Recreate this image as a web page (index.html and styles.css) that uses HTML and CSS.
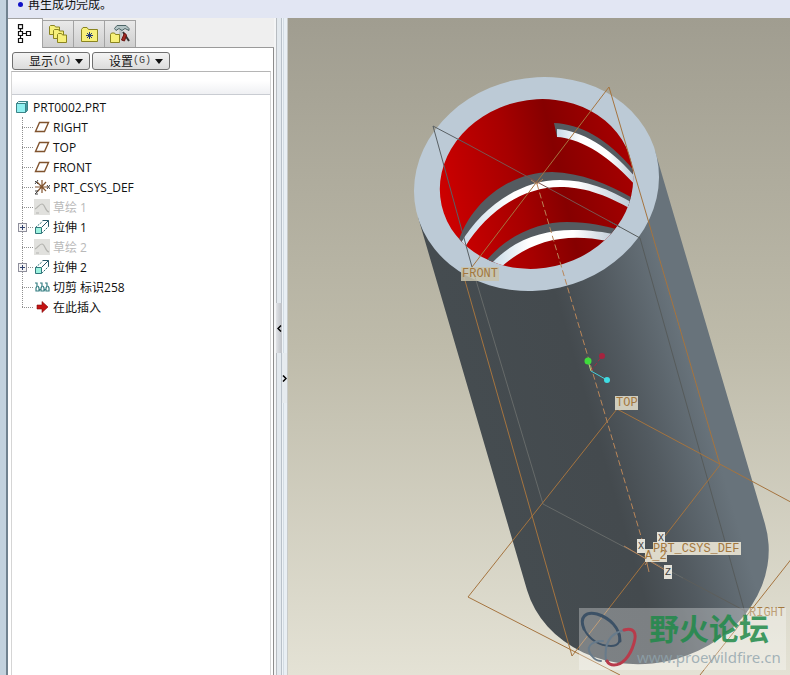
FILE: index.html
```html
<!DOCTYPE html>
<html lang="zh-CN">
<head>
  <meta charset="UTF-8" />
  <meta name="viewport" content="width=device-width, initial-scale=1.0" />
  <title>PRT0002</title>
  <link rel="stylesheet" href="styles.css">
</head>
<body>
  <div class="window">
    <p class="message"><span class="bullet"></span>再生成功完成。</p>

    <div class="workspace">
      <aside class="navigator">
        <nav class="tabs">
          <button class="tab active" type="button" aria-label="模型树">
            <svg width="16" height="20" viewBox="0 0 16 20" fill="none" stroke="#111" stroke-width="1.2">
              <path d="M3.5 4.5v11M5.500 9.500h4" />
              <path fill="#fff" d="M1.500 .7h4v4h-4zM1.500 7.500h4v4h-4zM9.500 7.500h4v4h-4zM1.500 14.500h4v4h-4z" />
            </svg>
          </button>
          <button class="tab" type="button" aria-label="文件夹浏览器">
            <svg width="20" height="20" viewBox="0 0 20 20" fill="#f7f07a" stroke="#8a8420">
              <path d="M1.500 10.500v-8l1-1h4l1 1.500h4v7.500z" />
              <path d="M5.500 14.500v-8l1-1h4l1 1.500h4v7.500z" />
              <path d="M9.500 18.500v-8l1-1h3l1 1.500h4v7.500z" />
            </svg>
          </button>
          <button class="tab" type="button" aria-label="收藏夹">
            <svg width="20" height="20" viewBox="0 0 20 20" fill="#f7f07a" stroke="#8a8420">
              <path d="M2.500 17.500v-12l1.500-2h4l1.500 2h9v12z" />
              <path stroke="#223a7a" d="M10.500 8v7M7 11.500h7M8 9l5 5M13 9l-5 5" />
            </svg>
          </button>
          <button class="tab" type="button" aria-label="连接">
            <svg width="22" height="20" viewBox="0 0 22 20">
              <path stroke="#b9c3c3" stroke-width="3" d="M12 5 11 15" />
              <path fill="#f7f07a" stroke="#8a8420" d="M1.500 18.500v-8l1-1.500h3l1 1.500h4v8z" />
              <path fill="#b4c4c5" stroke="#4d6567" d="M5.500 4.500 8 1.500h9l3 3v2l-4-2-3 2-3-2-3 2z" />
              <path stroke="#333" stroke-width="2" d="m14 8 6 9" />
              <path fill="#a32a22" stroke="#6b1511" d="m12.500 16 3-7 2 2-2 6z" />
            </svg>
          </button>
        </nav>

        <div class="panel">
          <div class="toolbar">
            <button class="drop" type="button">显示<span class="key">(O)</span><i class="arrow"></i></button>
            <button class="drop" type="button">设置<span class="key">(G)</span><i class="arrow"></i></button>
          </div>

          <div class="tree-box">
            <div class="tree-head"></div>
            <div class="root">
              <svg width="14" height="14" viewBox="0 0 14 14" stroke="#3b8488">
                <path fill="#dffcfc" d="m1.500 3.500 2-2h9l-2 2z" />
                <path fill="#459a9f" d="m10.500 3.500 2-2v9l-2 2z" />
                <path fill="#8ff0f0" d="M1.500 3.500h9v9h-9z" />
              </svg>
              PRT0002.PRT
            </div>
            <ul class="tree">
              <li><svg class="icon"><use href="#plane" /></svg>RIGHT</li>
              <li><svg class="icon"><use href="#plane" /></svg>TOP</li>
              <li><svg class="icon"><use href="#plane" /></svg>FRONT</li>
              <li><svg class="icon"><use href="#csys" /></svg>PRT_CSYS_DEF</li>
              <li class="hidden-item"><svg class="icon"><use href="#sketch" /></svg>草绘 1</li>
              <li><button class="expand" type="button" aria-label="展开"></button><svg class="icon"><use href="#extrude" /></svg>拉伸 1</li>
              <li class="hidden-item"><svg class="icon"><use href="#sketch" /></svg>草绘 2</li>
              <li><button class="expand" type="button" aria-label="展开"></button><svg class="icon"><use href="#extrude" /></svg>拉伸 2</li>
              <li><svg class="icon"><use href="#coil" /></svg>切剪 标识258</li>
              <li><svg class="icon"><use href="#insert" /></svg>在此插入</li>
            </ul>
          </div>
        </div>
      </aside>

      <div class="sash">
        <button class="handle left" type="button" aria-label="收起"><svg width="5" height="7" viewBox="0 0 5 7"><path d="M4 .5 1 3.500l3 3" /></svg></button>
        <button class="handle right" type="button" aria-label="展开"><svg width="5" height="7" viewBox="0 0 5 7"><path d="m1 .5 3 3-3 3" /></svg></button>
      </div>

      <main class="viewport">
        <svg class="scene" viewBox="288 18 502 657" preserveAspectRatio="xMinYMin slice">
          <defs>
            <linearGradient id="steel" gradientUnits="userSpaceOnUse" x1="472" y1="403" x2="708" y2="334">
              <stop offset="0" stop-color="#454c50" />
              <stop offset=".45" stop-color="#444a4e" />
              <stop offset=".65" stop-color="#525a60" />
              <stop offset=".9" stop-color="#68737b" />
              <stop offset="1" stop-color="#68737b" />
            </linearGradient>
            <linearGradient id="bore" x1="0" y1=".6" x2="1" y2=".4">
              <stop offset="0" stop-color="#cf0000" />
              <stop offset=".4" stop-color="#a60000" />
              <stop offset=".62" stop-color="#860000" />
              <stop offset="1" stop-color="#a80000" />
            </linearGradient>
            <linearGradient id="lip" x1="0" y1="0" x2="1" y2="0">
              <stop offset="0" stop-color="#c9dbe8" />
              <stop offset=".3" stop-color="#fff" />
              <stop offset=".65" stop-color="#fff" />
              <stop offset="1" stop-color="#b9c6d3" />
            </linearGradient>
            <clipPath id="hole">
              <ellipse cx="536.5" cy="184" rx="97.3" ry="84.2" transform="rotate(-12.8 536.5 184)" />
            </clipPath>
          </defs>

          <!-- tube -->
          <path fill="url(#steel)" d="M418 217 527 590A123.300 106.100 -12.800 0 0 765 524L655 151z" />
          <ellipse cx="536.5" cy="184" rx="123.3" ry="106.1" transform="rotate(-12.8 536.5 184)" fill="#bccad6" />
          <g clip-path="url(#hole)">
            <path fill="url(#bore)" d="M438 97h198v174H438z" />
            <!-- slots in the wall -->
            <path fill="#555b60" d="M554 123C580 124 608 138 636 173V180C610 149 582 133 557 131V137z" />
            <path fill="url(#lip)" d="M557 129C582 131 610 147 636 178V186C606 152 577 138 557 137z" />
            <path fill="#555b60" d="M458 243C470 204 508 172 552 172 582 173 608 184 636 200V210C600 192 582 184 560 184 520 182 482 212 464 243z" />
            <path fill="url(#lip)" d="M461 243C480 210 518 180 560 180 586 180 610 189 636 205V212C604 193 582 187 560 187 522 187 486 212 465 247z" />
            <path fill="#555b60" d="M486 261C508 234 540 222 567 222 590 222 604 226 620 230V237C560 227 530 235 495 265z" />
            <path fill="url(#lip)" d="M491 264C514 239 544 230 572 230 590 230 604 232 618 235L608 241C564 232 530 241 500 268z" />
          </g>

          <!-- datum planes -->
          <g fill="none" stroke-width="1">
            <path stroke="#596064" d="M433 126 472 267M433 126l36 19" />
            <path stroke="#7a5550" d="m469 145 151 82" />
            <path stroke="#565b5b" d="m609 221 31 17 107 382" />
            <path stroke="#666a69" d="m472 267 71 237 140 74" />
            <path stroke="#5d5e5b" d="m683 578 64 34" />
            <path stroke="#a5743f" d="M472 267 609 87 720 465 572 656 462 270" />
            <path stroke="#a5743f" d="M620 675 468 597 617 409 800 507M800 548 700 675" />
            <path stroke="#b98659" stroke-dasharray="6 3" d="M537 184 648 560" />
            <path stroke="#b98659" d="m624 546 41 24M645 555l4 17M645 565l16-22M537 184l-6-4M537 184l6-5" />
          </g>

          <!-- spin center -->
          <path stroke="#a02a44" stroke-width="1" stroke-dasharray="4 2" d="m591 371 11-15" />
          <path stroke="#b8dc80" d="m588 361 3 10" />
          <path stroke="#45cfd8" d="m591 371 16 9" />
          <circle cx="602" cy="356" r="3" fill="#a5243f" />
          <circle cx="588" cy="361" r="3.500" fill="#3fdc3c" />
          <circle cx="607" cy="380" r="3" fill="#3fdde4" />

          <!-- datum tags -->
          <g class="tags">
            <path fill="#c8c3ab" fill-opacity=".85" d="M461 267h38v14h-38z" />
            <path fill="#d0cdbd" d="M615 396h23v14h-23z" />
            <path fill="#dedacb" d="M653 542h88v13h-88zM645 549h22v13h-22z" />
            <path fill="#e4e2d9" d="M637 539h8v14h-8zM657 532h8v13h-8zM664 565h8v14h-8z" />
            <text x="462" y="277">FRONT</text>
            <text x="616" y="406">TOP</text>
            <text x="653" y="552">PRT_CSYS_DEF</text>
            <text x="645" y="559">A_2</text>
            <text x="749" y="616">RIGHT</text>
            <g class="axis">
              <text x="638" y="549">X</text>
              <text x="658" y="541">X</text>
              <text x="665" y="575">Z</text>
            </g>
          </g>

          <!-- watermark -->
          <g>
            <path fill="#fff" fill-opacity=".3" d="M579 608h207v62H579z" />
            <g fill="none" stroke-linecap="round">
              <path stroke="#3c5166" stroke-width="3" d="M584 629c-5-12 2-18 13-15 13 4 23 14 23 27" />
              <path stroke="#3c5166" stroke-width="2" d="M584 629c5 10 15 17 27 17 8 0 10-5 8-13" />
              <path stroke="#687b8b" stroke-width="2" d="M603 641c-13 0-18 7-11 15 3 4 7 5 9 5M606 661c-2-16 3-28 19-31" />
              <path stroke="#b83b4b" stroke-width="3" d="M624 630c10-3 13 3 10 13-4 14-12 22-20 22-4 0-6-2-7-4" />
            </g>
            <text class="forum" x="649" y="640">野火论坛</text>
            <text class="site" x="637" y="663">www.proewildfire.cn</text>
          </g>
        </svg>
      </main>
    </div>
  </div>

  <!-- tree icons -->
  <svg class="sprite" width="0" height="0">
    <symbol id="plane" viewBox="0 0 16 16">
      <path fill="none" stroke="#80532e" stroke-width="1.4" d="M5.500 3.500h9l-4 9h-9z" />
    </symbol>
    <symbol id="csys" viewBox="0 0 16 16">
      <path fill="none" stroke="#80532e" stroke-width="1.2" d="M1 8h13M8 1v13M3 3l9 9M3 13l9-10" />
      <path fill="none" stroke="#444" d="M1 2l3 3M4 1 1 5M13 6l3 4M16 6l-3 4M1 12h3l-3 3h3" />
    </symbol>
    <symbol id="sketch" viewBox="0 0 16 16">
      <path fill="#e1e1de" d="M0 0h16v16H0z" />
      <path fill="none" stroke="#b4b4b0" stroke-width="1.200" d="M1 10c3-1 4-5 7-5s3 7 7 8M2 14h3" />
    </symbol>
    <symbol id="extrude" viewBox="0 0 16 16">
      <path fill="#9cf3df" stroke="#32767c" d="M1.500 8.500h6v6h-6z" />
      <path fill="none" stroke="#32767c" stroke-dasharray="2 1" d="m1.500 8.500 7-6M7.500 14.500l7-7v-6" />
      <path fill="none" stroke="#28596a" d="M8.500 1.500h6v6M8 8l6-6" />
    </symbol>
    <symbol id="coil" viewBox="0 0 16 16">
      <path fill="none" stroke="#367f83" stroke-width="1.200" d="M1 4h2v3l-1 2v3h3V9L4 7M6 4h2v3L7 9v3h3V9L9 7M11 4h2v3l-1 2v3h3V9l-1-2M5 12l1-2M10 12l1-2" />
    </symbol>
    <symbol id="insert" viewBox="0 0 16 16">
      <path fill="#c41414" stroke="#7d0b0b" stroke-width=".6" d="M3 6h5V2.500l6 5.500-6 5.500V10H3z" />
    </symbol>
  </svg>
</body>
</html>
```
FILE: styles.css
```css
* { box-sizing: border-box; }
body { margin: 0; height: 100vh; overflow: hidden; background: #c3d2de; font-family: "Open Sans", "Noto Sans CJK SC", sans-serif; font-size: 12px; color: #111; }
button { margin: 0; padding: 0; font: inherit; color: inherit; cursor: pointer; }
.window { display: flex; flex-direction: column; height: 100vh; margin-left: 6px; border-left: 2px solid #71828f; background: #efefef; }

.message { display: flex; align-items: center; flex: none; height: 18px; margin: 0; padding: 0 0 8px 10px; background: #e2e6f3; line-height: 16px; font-family: "Liberation Sans", "Noto Sans CJK SC", sans-serif; }
.bullet { width: 5px; height: 5px; margin: 0 5px 2px 0; border-radius: 50%; background: #1010c8; }

.workspace { display: flex; flex: 1; min-height: 0; }

/* navigator */
.navigator { display: flex; flex-direction: column; flex: none; width: 266px; }
.tabs { display: flex; align-items: flex-end; flex: none; height: 30px; padding-right: 8px; border-bottom: 1px solid #9a9a9a; }
.tab { display: flex; align-items: center; justify-content: center; width: 31px; height: 27px; border: 1px solid #a3a3a3; border-left: 0; border-bottom: 0; background: linear-gradient(#e9e9e9, #cfcfcf); }
.tab.active { width: 35px; height: 30px; margin-bottom: -1px; border-color: #a3a3a3; background: #fff; }
.panel { display: flex; flex-direction: column; flex: 1; min-height: 0; padding: 4px 2px 0 3px; border-right: 1px solid #8c8c8c; background: #fff; }
.toolbar { display: flex; gap: 2px; padding-left: 1px; }
.drop { display: flex; align-items: center; justify-content: flex-end; width: 78px; height: 18px; padding-right: 6px; border: 1px solid #707070; border-radius: 3px; background: linear-gradient(#f4f4f4, #dcdcdc); font-family: "Noto Sans CJK SC", sans-serif; line-height: 16px; }
.key { margin-right: 4px; font-family: "Liberation Mono", monospace; font-size: 10px; color: #444; }
.arrow { border: 4px solid transparent; border-top: 5px solid #111; border-bottom: 0; }

.tree-box { flex: 1; margin-top: 1px; border: 1px solid #b5b5b5; border-bottom: 0; border-left-color: #d5d5d5; border-right-color: #d5d5d5; }
.tree-head { height: 23px; border-bottom: 1px solid #c9ccd2; background: linear-gradient(#fff 40%, #eff0f3); }
.root { display: flex; align-items: center; gap: 4px; height: 20px; margin-top: 2px; padding-left: 3px; }
.tree { position: relative; margin: 0 0 0 10px; padding: 0; list-style: none; }
.tree::before { content: ""; position: absolute; left: 0; top: 0; bottom: 10px; border-left: 1px dotted #909090; }
.tree li { display: flex; align-items: center; position: relative; height: 20px; padding-left: 12px; white-space: pre; }
.tree li::before { content: ""; position: absolute; left: 0; top: 10px; width: 11px; border-top: 1px dotted #909090; }
.icon { flex: none; width: 16px; height: 16px; margin-right: 3px; }
.tree .hidden-item { color: #b9b9b9; }
.expand { position: absolute; left: -4px; top: 6px; width: 9px; height: 9px; border: 1px solid #8f8f9c; background: linear-gradient(#33436e, #33436e) center / 5px 1px no-repeat, linear-gradient(#33436e, #33436e) center / 1px 5px no-repeat, #f4f4f4; }

/* sash between navigator and graphics area */
.sash { display: flex; flex-direction: column; flex: none; width: 14px; padding-top: 285px; border-right: 1px solid #c9cbc9; background: linear-gradient(90deg, #f4f5f6 2px, #b7bcc1 2px 3px, #e3e9ee 3px 7px, #b9c1c9 7px 8px, #eef3f7 8px 9px, #d3dce4 9px 10px, #e9eff4 10px); }
.handle { display: flex; align-items: center; justify-content: center; height: 50px; border: 0; background: #e6ebef; }
.handle path { fill: none; stroke: #000; stroke-width: 1.5; }
.handle.left { width: 6px; margin-left: 2px; background: linear-gradient(90deg, #e0e2e6, #bec1c6); }
.handle.right { align-self: flex-end; width: 5px; }

/* graphics area */
.viewport { flex: 1; min-width: 0; background: linear-gradient(#a09d90, #bebbaa 50%, #e4e2d5); }
.scene { display: block; width: 100%; height: 100%; }
.tags { font-family: "Liberation Mono", monospace; font-size: 12px; fill: #a3783f; }
.axis { font-size: 10px; fill: #3c3c3a; }
.forum { font-family: "Noto Sans CJK SC", sans-serif; font-size: 30px; font-weight: 700; fill: #1f8a49; fill-opacity: .85; }
.site { font-family: "Noto Sans", sans-serif; font-size: 15px; fill: #8fa3ac; fill-opacity: .8; }
.sprite { position: absolute; }
```
